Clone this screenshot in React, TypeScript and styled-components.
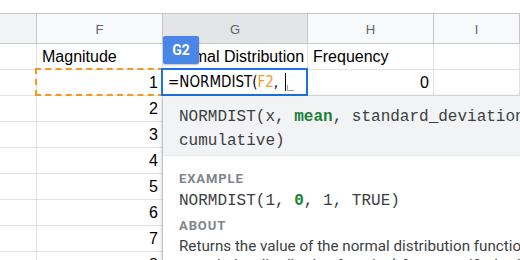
import React from "react";
import styled, { createGlobalStyle } from "styled-components";

const Global = createGlobalStyle`
  html, body { margin: 0; padding: 0; background: #fff; }
  body { width: 520px; height: 260px; overflow: hidden; font-family: "Liberation Sans", Arial, sans-serif; }
`;

const Sheet = styled.div`
  position: relative;
  width: 520px;
  height: 260px;
  overflow: hidden;
  background: #fff;
`;

const TopSpace = styled.div`
  height: 13px;
  background: #fff;
`;

const COLS = "37px 126px 145px 126px 1fr";

const HeaderRow = styled.div`
  display: grid;
  grid-template-columns: ${COLS};
  height: 31px;
  box-sizing: border-box;
  border-top: 1px solid #c7c7c7;
  border-bottom: 1px solid #c7c7c7;
`;

const HeaderCell = styled.div<{ $sel?: boolean; $dim?: boolean }>`
  box-sizing: border-box;
  border-right: 1px solid #c7c7c7;
  background: ${(p) => (p.$sel ? "#e3e5e8" : p.$dim ? "#f1f3f4" : "#f8f9fa")};
  color: #5f6368;
  font-size: 13px;
  display: flex;
  align-items: center;
  justify-content: center;
  padding-top: 1px;
`;

const Row = styled.div`
  display: grid;
  grid-template-columns: ${COLS};
  height: 26px;
  box-sizing: border-box;
  border-bottom: 1px solid #e2e2e2;
`;

const Cell = styled.div<{ $num?: boolean }>`
  box-sizing: border-box;
  border-right: 1px solid #e2e2e2;
  display: flex;
  align-items: center;
  justify-content: ${(p) => (p.$num ? "flex-end" : "flex-start")};
  padding: 0 4px 0 5px;
  font-size: 16px;
  color: #000;
  white-space: nowrap;
  overflow: hidden;
`;

const CopyRange = styled.div`
  position: absolute;
  left: 35px;
  top: 68px;
  width: 129px;
  height: 28px;
  box-sizing: border-box;
  border: 2px dashed #f29a1f;
`;

const Editor = styled.div`
  position: absolute;
  left: 161px;
  top: 68px;
  width: 147px;
  height: 28px;
  box-sizing: border-box;
  border: 2px solid #1a73e8;
  background: #fff;
  display: flex;
  align-items: center;
  padding-left: 5px;
  font-family: "Liberation Sans Narrow", "DejaVu Sans Condensed", "Roboto Condensed", "Liberation Sans", sans-serif;
  font-size: 15px;
  color: #000;
  white-space: pre;
`;

const Ref = styled.span`
  color: #f09b26;
`;

const Caret = styled.span`
  display: inline-block;
  width: 1px;
  height: 18px;
  background: #000;
  margin-left: 7px;
  position: relative;
  &::after {
    content: "";
    position: absolute;
    left: 2px;
    bottom: 0;
    width: 6px;
    height: 5px;
    border-left: 1px solid #9aa0a6;
    border-bottom: 1px solid #9aa0a6;
  }
`;

const RefLabel = styled.div`
  position: absolute;
  left: 163px;
  top: 36px;
  width: 36px;
  height: 28px;
  background: #4a86e8;
  border-radius: 2px;
  color: #fff;
  font-family: "Roboto", "Liberation Sans", sans-serif;
  font-weight: 700;
  font-size: 14px;
  display: flex;
  align-items: center;
  justify-content: center;
  box-shadow: 0 1px 2px rgba(0, 0, 0, 0.25);
`;

const Popup = styled.div`
  position: absolute;
  left: 163px;
  top: 96px;
  width: 420px;
  height: 200px;
  background: #fff;
  box-shadow: 0 1px 3px rgba(60, 64, 67, 0.35), 0 2px 8px rgba(60, 64, 67, 0.15);
`;

const MONO = `"Liberation Mono", "Courier New", monospace`;

const Signature = styled.div`
  background: #f1f3f4;
  padding: 9px 16px 3px 16px;
  height: 60px;
  box-sizing: border-box;
  border-bottom: 1px solid #e8eaed;
  font-family: ${MONO};
  font-size: 16px;
  line-height: 24px;
  color: #3c4043;
  white-space: pre;
`;

const Hl = styled.b`
  color: #188038;
  font-weight: 700;
`;

const Body = styled.div`
  padding: 13px 16px 0 16px;
`;

const SectionTitle = styled.div`
  font-family: "Roboto", "Liberation Sans", sans-serif;
  font-weight: 700;
  font-size: 13px;
  letter-spacing: 0.9px;
  color: #80868b;
  line-height: 20px;
`;

const Mono = styled.div`
  font-family: ${MONO};
  font-size: 16px;
  line-height: 24px;
  color: #3c4043;
  white-space: pre;
  margin-bottom: 3px;
`;

const About = styled.div`
  font-family: "Roboto", "Liberation Sans", sans-serif;
  font-size: 15.2px;
  line-height: 19px;
  color: #3c4043;
  white-space: nowrap;
  margin-top: 1px;
`;

const rows = [
  { f: "Magnitude", g: "Normal Distribution", h: "Frequency", text: true },
  { f: "1", g: "", h: "0" },
  { f: "2" },
  { f: "3" },
  { f: "4" },
  { f: "5" },
  { f: "6" },
  { f: "7" },
  { f: "8" },
];

export default function App() {
  return (
    <>
      <Global />
      <Sheet>
        <TopSpace />
        <HeaderRow>
          <HeaderCell $dim />
          <HeaderCell>F</HeaderCell>
          <HeaderCell $sel>G</HeaderCell>
          <HeaderCell>H</HeaderCell>
          <HeaderCell>I</HeaderCell>
        </HeaderRow>
        {rows.map((r, i) => (
          <Row key={i}>
            <Cell />
            <Cell $num={!r.text}>{r.f}</Cell>
            <Cell>{r.g}</Cell>
            <Cell $num={!r.text}>{r.h}</Cell>
            <Cell />
          </Row>
        ))}
        <CopyRange />
        <Editor>
          {"=NORMDIST("}
          <Ref>F2</Ref>
          {","}
          <Caret />
        </Editor>
        <RefLabel>G2</RefLabel>
        <Popup>
          <Signature>
            {"NORMDIST(x, "}
            <Hl>mean</Hl>
            {", standard_deviation,\ncumulative)"}
          </Signature>
          <Body>
            <SectionTitle>EXAMPLE</SectionTitle>
            <Mono>
              {"NORMDIST(1, "}
              <Hl>0</Hl>
              {", 1, TRUE)"}
            </Mono>
            <SectionTitle>ABOUT</SectionTitle>
            <About>
              Returns the value of the normal distribution function (or normal
              <br />
              cumulative distribution function) for a specified value, mean
            </About>
          </Body>
        </Popup>
      </Sheet>
    </>
  );
}
